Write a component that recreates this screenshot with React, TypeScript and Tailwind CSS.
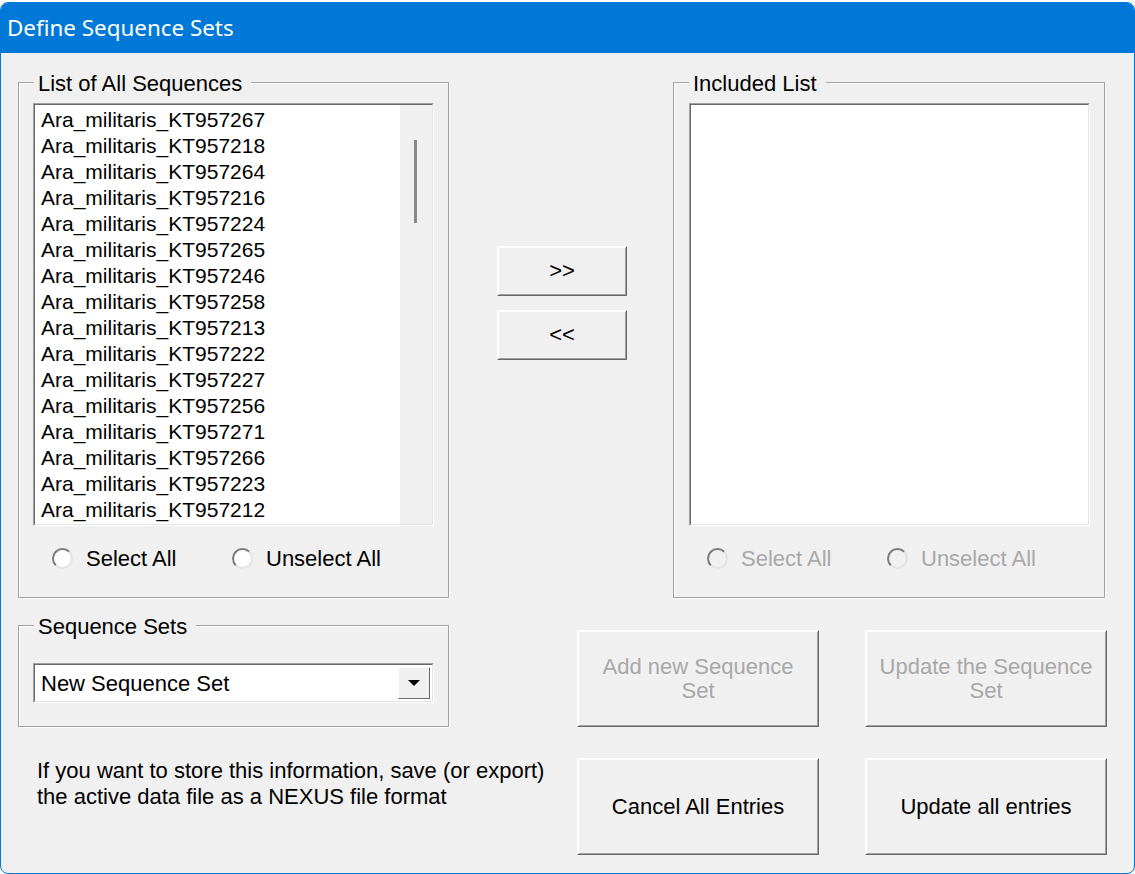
import { ReactNode } from 'react'

const sequences = [
    'KT957267', 'KT957218', 'KT957264', 'KT957216', 'KT957224', 'KT957265', 'KT957246', 'KT957258',
    'KT957213', 'KT957222', 'KT957227', 'KT957256', 'KT957271', 'KT957266', 'KT957223', 'KT957212',
]

// etched frame with the caption sitting on the top line
const GroupBox = ({ label, className, children }: { label: string, className: string, children?: ReactNode }) => (
    <div className={`relative border border-[#a0a0a0] shadow-[inset_1px_1px_0_#fff,1px_1px_0_#fff] ${className}`}>
        <span className="absolute -top-[9px] left-[15px] bg-[#f0f0f0] pl-[4px] pr-[9px] leading-[20px]">{label}</span>
        {children}
    </div>
)

const Sunken = ({ className, children }: { className: string, children?: ReactNode }) => (
    <div className={`border border-t-[#a0a0a0] border-l-[#a0a0a0] border-r-white border-b-white ${className}`}>
        <div className="w-full h-full border border-t-[#696969] border-l-[#696969] border-r-[#e3e3e3] border-b-[#e3e3e3] bg-white flex">
            {children}
        </div>
    </div>
)

const Button = ({ children, disabled, className }: { children: ReactNode, disabled?: boolean, className: string }) => (
    <div className={`border border-t-white border-l-white border-r-[#696969] border-b-[#696969] ${className}`}>
        <div className={`w-full h-full border border-t-white border-l-white border-r-[#a0a0a0] border-b-[#a0a0a0] bg-[#f0f0f0] flex items-center justify-center text-center leading-[24px] ${disabled ? 'text-[#a8a8a8]' : 'text-black'}`}>
            {children}
        </div>
    </div>
)

const Radio = ({ label, disabled }: { label: string, disabled?: boolean }) => (
    <div className="flex items-center w-[180px] h-[26px]">
        <div className={`w-[21px] h-[21px] rounded-full border-2 border-t-[#7a7a7a] border-l-[#7a7a7a] border-r-[#e3e3e3] border-b-[#e3e3e3] ${disabled ? 'bg-[#f0f0f0]' : 'bg-white'}`} />
        <span className={`ml-[13px] ${disabled ? 'text-[#a8a8a8]' : 'text-black'}`}>{label}</span>
    </div>
)

export default function App() {
    return (
    <div className="bg-white pt-[2px] w-[1135px] h-[874px] font-['Liberation_Sans',Arial,sans-serif] text-[22px] text-black">
        <div className="w-[1135px] h-[872px] border border-[#0078d7] rounded-[8px] overflow-hidden bg-[#f0f0f0] flex flex-col">
            <div className="h-[50px] bg-[#0078d7] text-white pl-[6px] pt-[1px] flex items-center font-['Noto_Sans',sans-serif] text-[22.4px] leading-none">
                Define Sequence Sets
            </div>

            <div className="pl-[17px] flex flex-col">
                {/* lists */}
                <div className="flex items-start mt-[29px]">
                    <GroupBox label="List of All Sequences" className="w-[431px] h-[516px] pt-[20px] pl-[14px]">
                        <Sunken className="w-[401px] h-[423px]">
                            <div className="flex-1 pl-[6px] pt-[2px] text-[21px] leading-[26px]">
                                {sequences.map(s => <div key={s}>Ara_militaris_{s}</div>)}
                            </div>
                            <div className="w-[32px] bg-[#f0f0f0] pl-[14px] pt-[35px]">
                                <div className="w-[3px] h-[83px] bg-[#888888]" />
                            </div>
                        </Sunken>
                        <div className="flex mt-[19px] pl-[19px]">
                            <Radio label="Select All" />
                            <Radio label="Unselect All" />
                        </div>
                    </GroupBox>

                    <div className="ml-[48px] mt-[164px] flex flex-col gap-[14px] w-[130px]">
                        <Button className="w-[130px] h-[50px]">&gt;&gt;</Button>
                        <Button className="w-[130px] h-[50px]">&lt;&lt;</Button>
                    </div>

                    <GroupBox label="Included List" className="ml-[46px] w-[432px] h-[516px] pt-[20px] pl-[15px]">
                        <Sunken className="w-[401px] h-[423px]" />
                        <div className="flex mt-[19px] pl-[18px]">
                            <Radio label="Select All" disabled />
                            <Radio label="Unselect All" disabled />
                        </div>
                    </GroupBox>
                </div>

                {/* sequence sets */}
                <div className="flex items-start mt-[27px]">
                    <GroupBox label="Sequence Sets" className="w-[431px] h-[102px] pt-[37px] pl-[14px]">
                        <Sunken className="w-[401px] h-[40px]">
                            <div className="flex-1 pl-[6px] leading-[38px]">New Sequence Set</div>
                            <div className="pr-[2px] flex items-center">
                                <div className="w-[32px] h-[32px] border border-t-white border-l-white border-r-[#696969] border-b-[#696969] bg-[#f0f0f0] flex items-center justify-center">
                                    <svg width="14" height="8" viewBox="0 0 14 8"><path d="M1 1h12L7 7z" fill="#000" /></svg>
                                </div>
                            </div>
                        </Sunken>
                    </GroupBox>
                    <Button disabled className="ml-[128px] mt-[5px] w-[242px] h-[97px]">Add new Sequence<br />Set</Button>
                    <Button disabled className="ml-[46px] mt-[5px] w-[242px] h-[97px]">Update the Sequence<br />Set</Button>
                </div>

                {/* footer */}
                <div className="flex items-start mt-[31px]">
                    <div className="w-[559px] pl-[19px] leading-[26px]">
                        If you want to store this information, save (or export)<br />
                        the active data file as a NEXUS file format
                    </div>
                    <Button className="w-[242px] h-[97px]">Cancel All Entries</Button>
                    <Button className="ml-[46px] w-[242px] h-[97px]">Update all entries</Button>
                </div>
            </div>
        </div>
    </div>
    )
}
